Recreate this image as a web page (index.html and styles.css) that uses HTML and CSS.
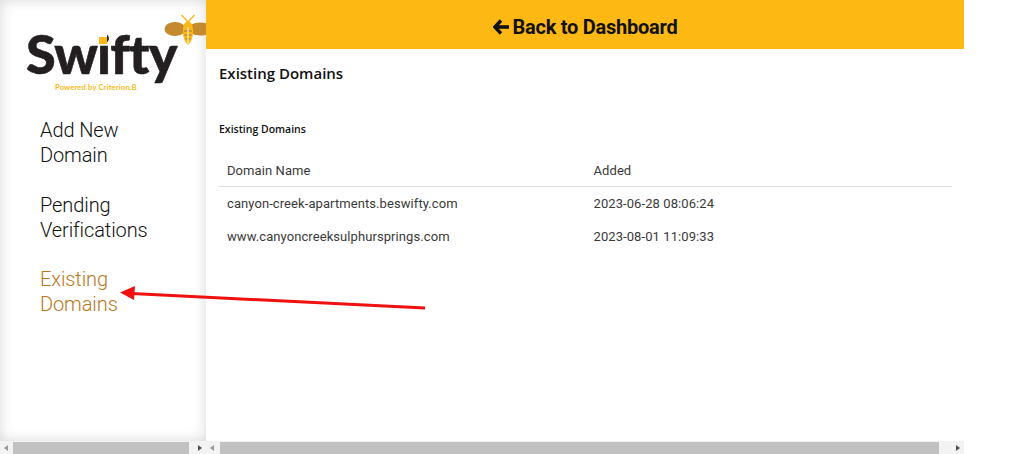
FILE: index.html
```
<!DOCTYPE html>
<html lang="en">
<head>
<meta charset="utf-8">
<title>Existing Domains</title>
<link rel="stylesheet" href="styles.css">
</head>
<body>
<div class="app">
  <aside class="sidebar">
    <div class="sidebar-body">
      <div class="logo">
        <span class="wordmark">Swifty</span>
        <span class="dot"></span>
        <span class="powered">Powered by Criterion.B</span>
        <svg class="bee" viewBox="0 0 44 32" width="44" height="32" aria-hidden="true">
          <path d="M17.500 1 L24 8 M30.500 1 L24 8" stroke="#fdb813" stroke-width="1.400" fill="none"/>
          <ellipse cx="11" cy="15" rx="10.500" ry="7" fill="#c68a2e"/>
          <ellipse cx="36" cy="15" rx="12" ry="6.500" fill="#c68a2e"/>
          <path d="M24 7 C28 8 29.500 13 29 20 C28.500 25 26.500 29 24 31 C21.500 29 19.500 25 19 20 C18.500 13 20 8 24 7 Z" fill="#fdb813"/>
          <path d="M20 17 H28 M20.500 21 H27.500 M21.500 25 H26.500" stroke="#c68a2e" stroke-width="1.300"/>
          <path d="M24 13 V30" stroke="#fff" stroke-width="1"/>
        </svg>
      </div>
      <nav class="nav">
        <a class="nav-link">Add New Domain</a>
        <a class="nav-link">Pending Verifications</a>
        <a class="nav-link active">Existing Domains</a>
      </nav>
    </div>
    <div class="scrollbar">
      <span class="arrow left"></span>
      <span class="thumb side-thumb"></span>
      <span class="arrow right"></span>
    </div>
  </aside>
  <main class="main">
    <div class="main-body">
      <header class="topbar">
        <svg class="back-icon" viewBox="0 0 16 16" width="16" height="16" aria-hidden="true">
          <path d="M8 1.500 L1.800 8 L8 14.500 M2.500 8 H16" stroke="#111" stroke-width="3.400" fill="none"/>
        </svg>
        <span>Back to Dashboard</span>
      </header>
      <div class="content">
        <h1 class="title">Existing Domains</h1>
        <h2 class="subtitle">Existing Domains</h2>
        <table class="table">
          <thead>
            <tr><th class="col-name">Domain Name</th><th>Added</th></tr>
          </thead>
          <tbody>
            <tr><td>canyon-creek-apartments.beswifty.com</td><td>2023-06-28 08:06:24</td></tr>
            <tr><td>www.canyoncreeksulphursprings.com</td><td>2023-08-01 11:09:33</td></tr>
          </tbody>
        </table>
      </div>
    </div>
    <div class="scrollbar">
      <span class="arrow left"></span>
      <span class="thumb main-thumb"></span>
      <span class="arrow right"></span>
    </div>
  </main>
  <svg class="annotation" viewBox="0 0 1032 454" width="1032" height="454" aria-hidden="true">
    <path d="M425 308 L132 293.500" stroke="#f01010" stroke-width="3" fill="none"/>
    <path d="M120 292.500 L135 286 L134 300 Z" fill="#f01010"/>
  </svg>
</div>
</body>
</html>
```
FILE: styles.css
```
* { box-sizing: border-box; }
html, body { margin: 0; height: 100%; background: #fff; overflow: hidden; }
body { font-family: Roboto, "Liberation Sans", sans-serif; color: #222; }
.app { display: flex; width: 964px; height: 454px; position: relative; }
.sidebar {
  width: 206px; flex: none; display: flex; flex-direction: column;
  position: relative;
}
.sidebar-body {
  flex: 1; min-height: 0; padding: 14px 0 0 40px;
  background: #fff;
  box-shadow: inset 0 0 13px rgba(0, 0, 0, .16);
}
.logo { position: relative; height: 84px; width: 206px; margin-left: -40px; overflow: hidden; }
.wordmark {
  position: absolute; left: 26px; top: 15px;
  font: 900 54px/50px Lato, Inter, sans-serif; letter-spacing: -.8px; color: #231f20;
  -webkit-text-stroke: .6px #231f20;
}
.dot {
  position: absolute; left: 99px; top: 17px; width: 8px; height: 13px;
  background: #fdb813; border-top: 6px solid #fff;
}
.powered {
  position: absolute; left: 55px; top: 69px;
  font: 700 7.500px/9px Lato, sans-serif; color: #fdb813; white-space: nowrap; letter-spacing: .2px;
}
.bee { position: absolute; left: 164px; top: 0; }
.nav { display: flex; flex-direction: column; gap: 24.500px; margin-top: 20px; width: 125px; }
.nav-link { font-size: 20px; line-height: 25px; letter-spacing: -.1px; color: #111; font-weight: 300; }
.nav-link.active { color: #b9771a; }
.main { width: 758px; flex: none; display: flex; flex-direction: column; }
.main-body { flex: 1; min-height: 0; }
.topbar {
  height: 49px; background: #fdb813; display: flex; align-items: center; justify-content: center; gap: 4px;
  font-size: 20px; font-weight: 700; color: #111; letter-spacing: -.25px; padding-top: 4px;
}
.content { padding: 0 12px 0 13px; }
.title { margin: 14px 0 0; font: 600 15px/20px "Open Sans", sans-serif; color: #111; }
.subtitle { margin: 39px 0 0; font: 600 10.500px/14px "Open Sans", sans-serif; color: #111; }
.table { width: 100%; margin-top: 19px; border-collapse: collapse; font-size: 13px; letter-spacing: .08px; color: #3a3a3a; }
.table th { font-weight: 400; text-align: left; padding: 1px 8px 0; height: 31px; border-bottom: 1px solid #ddd; }
.table td { padding: 2px 8px 0; height: 33px; }
.col-name { width: 366.500px; }
.scrollbar {
  flex: none; height: 13px; margin-bottom: 0; background: #f3f3f3;
  display: flex; align-items: center;
}
.arrow { width: 13px; flex: none; height: 13px; position: relative; }
.main .arrow { width: 14px; }
.arrow::before {
  content: ""; position: absolute; top: 3.500px; border: 3px solid transparent;
}
.arrow.left::before { left: 4px; border-right: 4px solid #999; border-left: 0; }
.arrow.right::before { right: 4px; border-left: 4px solid #505050; border-right: 0; }
.thumb { height: 12px; background: #c1c1c1; }
.side-thumb { flex: 1; max-width: 176px; }
.sidebar .arrow.right { margin-left: auto; }
.main-thumb { width: 719px; }
.main .arrow.right { margin-left: auto; }
.annotation { position: absolute; left: 0; top: 0; pointer-events: none; }
```
